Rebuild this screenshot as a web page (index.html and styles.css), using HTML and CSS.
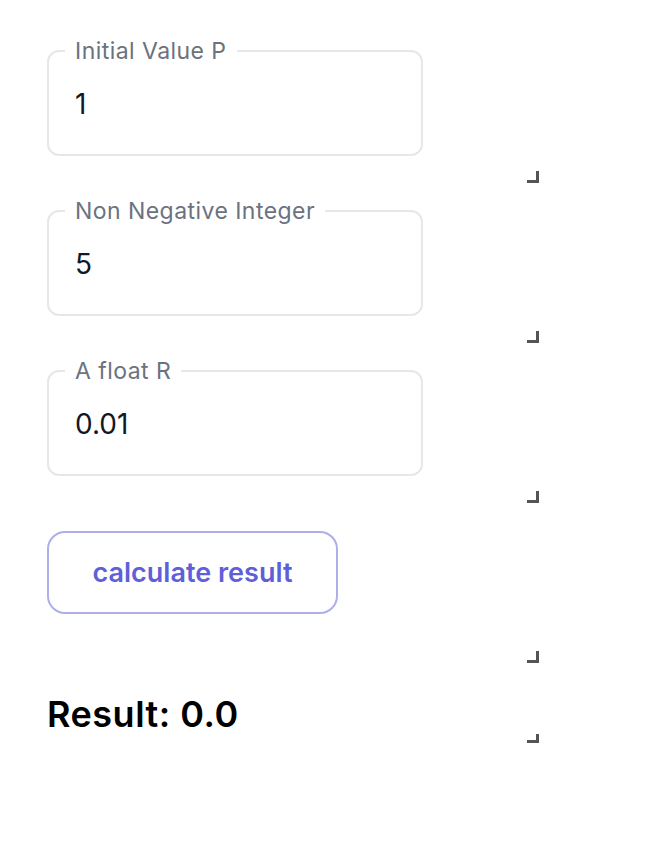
FILE: index.html
```html
<!DOCTYPE html>
<html>
<head>
<meta name="viewport" content="width=device-width, initial-scale=1.0">
<link rel="stylesheet" href="styles.css">
</head>
<body>
  <div class="main">
    <div class="row">
      <fieldset class="field">
        <legend>Initial Value P</legend>
        <input type="text" value="1">
      </fieldset>
      <div class="grip"></div>
    </div>
    <div class="row">
      <fieldset class="field">
        <legend>Non Negative Integer</legend>
        <input type="text" value="5">
      </fieldset>
      <div class="grip"></div>
    </div>
    <div class="row">
      <fieldset class="field">
        <legend>A float R</legend>
        <input type="text" value="0.01">
      </fieldset>
      <div class="grip"></div>
    </div>
    <div class="row">
      <button class="calc">calculate result</button>
      <div class="grip"></div>
    </div>
    <div class="row short">
      <div class="result">Result: 0.0</div>
      <div class="grip"></div>
    </div>
  </div>
</body>
</html>
```
FILE: styles.css
```css
* {box-sizing: border-box;}

body {
  margin: 0;
  font-family: Inter, "Noto Sans", sans-serif;
  background: #fff;
}

.main {
  width: 539px;
  padding: 24px 0 0 47px;
}

.row {
  display: flex;
  flex-direction: column;
  align-items: flex-start;
  height: 160px;
}

.row.short {
  height: 80px;
}

.field {
  margin: 15px 0 0;
  width: 376px;
  height: 117px;
  padding: 23px 26px 32px;
  border: 2px solid #e5e7eb;
  border-radius: 12px;
}

.field legend {
  font-size: 23px;
  line-height: 24px;
  letter-spacing: 0.45px;
  color: #6b7280;
  padding: 0 10px;
  margin-left: -10px;
}

.field input {
  display: block;
  width: 100%;
  height: 36px;
  padding: 0;
  border: none;
  outline: none;
  font-family: inherit;
  font-size: 28px;
  color: #111827;
}

.calc {
  margin-top: 27px;
  width: 291px;
  height: 83px;
  background: #fff;
  border: 2px solid #aeaee8;
  border-radius: 18px;
  font-family: inherit;
  font-size: 27px;
  font-weight: 600;
  color: #5f5fd9;
}

.result {
  margin-top: 30px;
  font-size: 36px;
  line-height: 40px;
  letter-spacing: 0.5px;
  font-weight: 600;
  color: #000;
}

.grip {
  margin-top: auto;
  margin-bottom: 1px;
  align-self: flex-end;
  width: 12px;
  height: 12px;
  border-right: 3px solid #555;
  border-bottom: 3px solid #555;
}
```
